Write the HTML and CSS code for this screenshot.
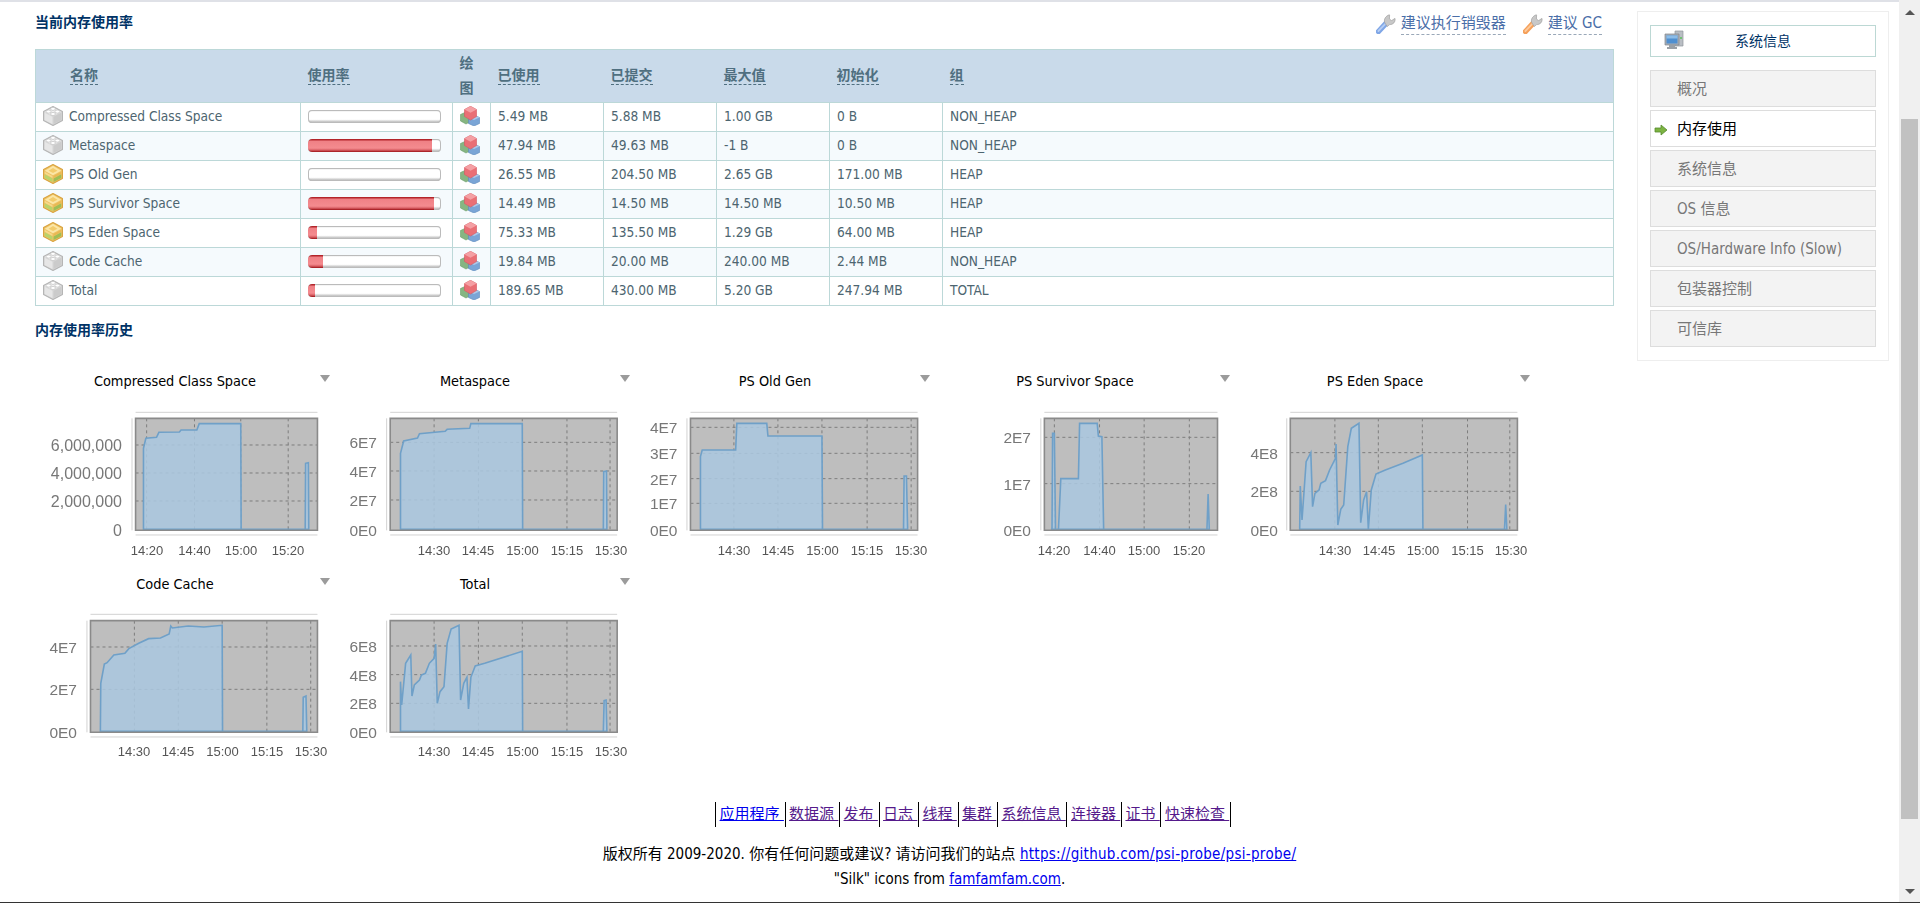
FILE: index.html
```html
<!DOCTYPE html>
<html lang="zh-CN">
<head>
<meta charset="utf-8">
<title>系统信息</title>
<link rel="stylesheet" href="styles.css">
</head>
<body>
<svg class="defs" aria-hidden="true">
  <symbol id="brick-grey" viewBox="1 1 18 18">
    <path d="M10 1.5 18.5 6v8L10 18.5 1.5 14V6Z" fill="#d6d6d6" stroke="#b5b5b5" stroke-linejoin="round"/>
    <path d="M10 2.5 17.5 6.2 10 10 2.5 6.2Z" fill="#f1f1f1"/>
    <path d="M2.5 7 9.5 10.6V17.2L2.5 13.6Z" fill="#e6e6e6"/>
    <path d="M17.5 7 10.5 10.6V17.2L17.5 13.6Z" fill="#cbcbcb"/>
    <ellipse cx="10" cy="3.6" rx="2.2" ry="1.4" fill="#fff" stroke="#bbb" stroke-width=".6"/>
    <ellipse cx="6" cy="6" rx="2.2" ry="1.4" fill="#fff" stroke="#bbb" stroke-width=".6"/>
    <ellipse cx="14" cy="6" rx="2.2" ry="1.4" fill="#fff" stroke="#bbb" stroke-width=".6"/>
    <ellipse cx="10" cy="8.2" rx="2.2" ry="1.4" fill="#fff" stroke="#bbb" stroke-width=".6"/>
  </symbol>
  <symbol id="brick-gold" viewBox="1 1 18 18">
    <path d="M10 1.5 18.5 6v8L10 18.5 1.5 14V6Z" fill="#eec264" stroke="#d9a441" stroke-linejoin="round"/>
    <path d="M10 2.5 17.5 7 10 11.2 2.5 7Z" fill="#fbe6a6"/>
    <path d="M10 4.6 14 7 10 9.2 6 7Z" fill="#f3cc6c"/>
    <path d="M2.5 8 9.5 11.8V13.6L2.5 9.8Z" fill="#f6d98b"/>
    <path d="M17.5 8 10.5 11.8V13.6L17.5 9.8Z" fill="#e9b854"/>
    <path d="M2.5 10.2 9.5 14V17.2L2.5 13.6Z" fill="#b9d36a"/>
    <path d="M17.5 10.2 10.5 14V17.2L17.5 13.6Z" fill="#9fbe55"/>
  </symbol>
  <symbol id="cubes" viewBox="0 0 20 20">
    <path d="M.5 8.5 6 6l5.5 2.5v6.5L6 18 .5 15Z" fill="#86b582" stroke="#69a069" stroke-width=".6"/>
    <path d="M8.500 11.500 14 9l5.500 2.500v6L14 20l-5.500-2.500Z" fill="#7aa5d6" stroke="#5a88bb" stroke-width=".6"/>
    <path d="M8.500 11.500 14 14l5.500-2.500L14 9Z" fill="#abc8e8"/>
    <path d="M4.500 3.500 10.500.3 16.500 3.500v7L10.500 14l-6-3.500Z" fill="#e96f75" stroke="#d5585f" stroke-width=".6"/>
    <path d="M4.500 3.500 10.500 6.700 16.500 3.500 10.500.3Z" fill="#f4a0a4"/>
  </symbol>
  <symbol id="wrench-blue" viewBox="0 0 20 20">
    <path d="M2.5 17.5 10 9.4" stroke="#7fa6e6" stroke-width="5.4" stroke-linecap="round"/>
    <path d="M2.4 17 9.6 9.6" stroke="#b5cdf3" stroke-width="1.8" stroke-linecap="round"/>
    <path d="M8.6 8.2c-.8-3 1-6.2 4.8-7.4L13.6 1l-.2 4 2.2 1.6 3.4-2.2c.6 3.6-1.8 6.2-5.4 6.2l-2.4 2Z" fill="#c8c8c8" stroke="#a0a0a0" stroke-width=".7" stroke-linejoin="round"/>
  </symbol>
  <symbol id="wrench-orange" viewBox="0 0 20 20">
    <path d="M2.5 17.5 10 9.4" stroke="#f5a05a" stroke-width="5.4" stroke-linecap="round"/>
    <path d="M2.4 17 9.6 9.6" stroke="#fcc99b" stroke-width="1.8" stroke-linecap="round"/>
    <path d="M8.6 8.2c-.8-3 1-6.2 4.8-7.4L13.6 1l-.2 4 2.2 1.6 3.4-2.2c.6 3.6-1.8 6.2-5.4 6.2l-2.4 2Z" fill="#c8c8c8" stroke="#a0a0a0" stroke-width=".7" stroke-linejoin="round"/>
  </symbol>
</svg>

<div class="viewport">
  <div class="main">
    <div class="content">
      <div class="left">
        <div class="headrow">
          <h3 class="heading">当前内存使用率</h3>
          <div class="actions">
            <a class="action"><svg class="ic20"><use href="#wrench-blue"/></svg><span>建议执行销毁器</span></a>
            <a class="action"><svg class="ic20"><use href="#wrench-orange"/></svg><span>建议 GC</span></a>
          </div>
        </div>
        <table class="pools">
          <colgroup>
            <col class="c-name"><col class="c-use"><col class="c-plot"><col class="c-num"><col class="c-num"><col class="c-num"><col class="c-num"><col>
          </colgroup>
          <thead>
            <tr>
              <th class="th-name"><span class="dash">名称</span></th>
              <th><span class="dash">使用率</span></th>
              <th>绘图</th>
              <th><span class="dash">已使用</span></th>
              <th><span class="dash">已提交</span></th>
              <th><span class="dash">最大值</span></th>
              <th><span class="dash">初始化</span></th>
              <th><span class="dash">组</span></th>
            </tr>
          </thead>
          <tbody>
            <tr>
              <td><div class="namecell"><svg class="ic20"><use href="#brick-grey"/></svg>Compressed Class Space</div></td>
              <td><div class="bar"></div></td>
              <td><svg class="ic20 block"><use href="#cubes"/></svg></td>
              <td>5.49 MB</td><td>5.88 MB</td><td>1.00 GB</td><td>0 B</td><td>NON_HEAP</td>
            </tr>
            <tr>
              <td><div class="namecell"><svg class="ic20"><use href="#brick-grey"/></svg>Metaspace</div></td>
              <td><div class="bar"><div class="fill" style="width:93%"></div></div></td>
              <td><svg class="ic20 block"><use href="#cubes"/></svg></td>
              <td>47.94 MB</td><td>49.63 MB</td><td>-1 B</td><td>0 B</td><td>NON_HEAP</td>
            </tr>
            <tr>
              <td><div class="namecell"><svg class="ic20"><use href="#brick-gold"/></svg>PS Old Gen</div></td>
              <td><div class="bar"></div></td>
              <td><svg class="ic20 block"><use href="#cubes"/></svg></td>
              <td>26.55 MB</td><td>204.50 MB</td><td>2.65 GB</td><td>171.00 MB</td><td>HEAP</td>
            </tr>
            <tr>
              <td><div class="namecell"><svg class="ic20"><use href="#brick-gold"/></svg>PS Survivor Space</div></td>
              <td><div class="bar"><div class="fill" style="width:95%"></div></div></td>
              <td><svg class="ic20 block"><use href="#cubes"/></svg></td>
              <td>14.49 MB</td><td>14.50 MB</td><td>14.50 MB</td><td>10.50 MB</td><td>HEAP</td>
            </tr>
            <tr>
              <td><div class="namecell"><svg class="ic20"><use href="#brick-gold"/></svg>PS Eden Space</div></td>
              <td><div class="bar"><div class="fill" style="width:7%"></div></div></td>
              <td><svg class="ic20 block"><use href="#cubes"/></svg></td>
              <td>75.33 MB</td><td>135.50 MB</td><td>1.29 GB</td><td>64.00 MB</td><td>HEAP</td>
            </tr>
            <tr>
              <td><div class="namecell"><svg class="ic20"><use href="#brick-grey"/></svg>Code Cache</div></td>
              <td><div class="bar"><div class="fill" style="width:11%"></div></div></td>
              <td><svg class="ic20 block"><use href="#cubes"/></svg></td>
              <td>19.84 MB</td><td>20.00 MB</td><td>240.00 MB</td><td>2.44 MB</td><td>NON_HEAP</td>
            </tr>
            <tr>
              <td><div class="namecell"><svg class="ic20"><use href="#brick-grey"/></svg>Total</div></td>
              <td><div class="bar"><div class="fill" style="width:5%"></div></div></td>
              <td><svg class="ic20 block"><use href="#cubes"/></svg></td>
              <td>189.65 MB</td><td>430.00 MB</td><td>5.20 GB</td><td>247.94 MB</td><td>TOTAL</td>
            </tr>
          </tbody>
        </table>

        <h3 class="heading heading-hist">内存使用率历史</h3>

        <div class="charts">
          <figure class="chart">
            <figcaption>Compressed Class Space</figcaption><i class="menu"></i>
            <svg class="plot" width="300" height="165">
              <g transform="translate(5,-50) scale(.3954,.3333)">
                <path class="frame" d="M267 187H727M267 555H727M258 205V541"/>
                <rect class="bg" x="267" y="205" width="460" height="336"/>
                <path class="grid" d="M295 205V541M416 205V541M533 205V541M653 205V541M267 285H727M267 369H727M267 453H727"/>
                <path class="area" d="M287 538V295L293 265 320 262 326 247 378 246 382 240 422 240 428 221H533L534 538H696L697 340 704 338 705 538Z"/>
                <rect class="border" x="267" y="205" width="460" height="336"/>
              </g>
              <text class="ya ya-wide" x="97" y="45">6,000,000</text><text class="ya ya-wide" x="97" y="73">4,000,000</text><text class="ya ya-wide" x="97" y="101">2,000,000</text><text class="ya ya-wide" x="97" y="130">0</text>
              <text class="xa" x="122" y="150">14:20</text><text class="xa" x="169.5" y="150">14:40</text><text class="xa" x="216" y="150">15:00</text><text class="xa" x="263" y="150">15:20</text>
            </svg>
          </figure>
          <figure class="chart">
            <figcaption>Metaspace</figcaption><i class="menu"></i>
            <svg class="plot" width="300" height="165">
              <g transform="translate(-295,-50) scale(.3954,.3333)">
                <path class="frame" d="M911 187H1485M911 555H1485M902 205V541"/>
                <rect class="bg" x="911" y="205" width="574" height="336"/>
                <path class="grid" d="M1022 205V541M1134 205V541M1245 205V541M1358 205V541M1467 205V541M911 277H1485M911 363H1485M911 450H1485"/>
                <path class="area" d="M937 538V310L945 273 980 264 985 251 1050 244 1055 238 1112 235 1115 221H1245L1246 538H1450L1451 365 1458 363 1459 538Z"/>
                <rect class="border" x="911" y="205" width="574" height="336"/>
              </g>
              <text class="ya" x="52" y="42">6E7</text><text class="ya" x="52" y="71">4E7</text><text class="ya" x="52" y="100">2E7</text><text class="ya" x="52" y="130">0E0</text>
              <text class="xa" x="109" y="150">14:30</text><text class="xa" x="153" y="150">14:45</text><text class="xa" x="197.5" y="150">15:00</text><text class="xa" x="242" y="150">15:15</text><text class="xa" x="286" y="150">15:30</text>
            </svg>
          </figure>
          <figure class="chart">
            <figcaption>PS Old Gen</figcaption><i class="menu"></i>
            <svg class="plot" width="300" height="165">
              <g transform="translate(15,-50) scale(.5869,.3333)">
                <path class="frame" d="M86 187H473M86 555H473M80 205V541"/>
                <rect class="bg" x="86" y="205" width="387" height="336"/>
                <path class="grid" d="M160 205V541M235 205V541M310 205V541M387 205V541M462 205V541M86 232H473M86 310H473M86 386H473M86 460H473"/>
                <path class="area" d="M103 538V320L106 300H163L165 220H216L218 258H310L311 538H449L450 378H454L456 538Z"/>
                <rect class="border" x="86" y="205" width="387" height="336"/>
              </g>
              <text class="ya" x="52.5" y="27">4E7</text><text class="ya" x="52.5" y="53">3E7</text><text class="ya" x="52.5" y="79">2E7</text><text class="ya" x="52.5" y="103">1E7</text><text class="ya" x="52.5" y="130">0E0</text>
              <text class="xa" x="109" y="150">14:30</text><text class="xa" x="153" y="150">14:45</text><text class="xa" x="197.5" y="150">15:00</text><text class="xa" x="242" y="150">15:15</text><text class="xa" x="286" y="150">15:30</text>
            </svg>
          </figure>
          <figure class="chart">
            <figcaption>PS Survivor Space</figcaption><i class="menu"></i>
            <svg class="plot" width="300" height="165">
              <g transform="translate(-285,-50) scale(.5869,.3333)">
                <path class="frame" d="M689 187H984M689 555H984M683 205V541"/>
                <rect class="bg" x="689" y="205" width="295" height="336"/>
                <path class="grid" d="M706 205V541M783 205V541M859 205V541M936 205V541M689 262H984M689 401H984"/>
                <path class="area" d="M700 538H702L703 250H706L708 538H713L717 386H747L749 220H779L781 258 787 260 790 538H966L968 432 970 538Z"/>
                <rect class="border" x="689" y="205" width="295" height="336"/>
              </g>
              <text class="ya" x="106" y="37">2E7</text><text class="ya" x="106" y="84">1E7</text><text class="ya" x="106" y="130">0E0</text>
              <text class="xa" x="129" y="150">14:20</text><text class="xa" x="174.5" y="150">14:40</text><text class="xa" x="219" y="150">15:00</text><text class="xa" x="264" y="150">15:20</text>
            </svg>
          </figure>
          <figure class="chart">
            <figcaption>PS Eden Space</figcaption><i class="menu"></i>
            <svg class="plot" width="300" height="165">
              <g transform="translate(-585,-50) scale(.5869,.3333)">
                <path class="frame" d="M1108 187H1495M1108 555H1495M1102 205V541"/>
                <rect class="bg" x="1108" y="205" width="387" height="336"/>
                <path class="grid" d="M1184 205V541M1258 205V541M1333 205V541M1410 205V541M1482 205V541M1108 308H1495M1108 424H1495"/>
                <path class="area" d="M1124 538 1125 408 1128 510 1135 335 1143 308 1146 470 1150 430 1157 420 1160 400 1168 392 1175 360 1185 325 1186 282 1189 525 1194 478 1199 465 1206 290 1212 235 1225 220 1228 518 1233 450 1238 425 1241 538 1246 420 1254 372 1270 360 1300 340 1333 315 1334 538H1473L1475 464 1477 538Z"/>
                <rect class="border" x="1108" y="205" width="387" height="336"/>
              </g>
              <text class="ya" x="53" y="53">4E8</text><text class="ya" x="53" y="91">2E8</text><text class="ya" x="53" y="130">0E0</text>
              <text class="xa" x="110" y="150">14:30</text><text class="xa" x="154" y="150">14:45</text><text class="xa" x="198" y="150">15:00</text><text class="xa" x="242.5" y="150">15:15</text><text class="xa" x="286" y="150">15:30</text>
            </svg>
          </figure>
          <figure class="chart">
            <figcaption>Code Cache</figcaption><i class="menu"></i>
            <svg class="plot" width="300" height="165">
              <g transform="translate(5,-43) scale(.3954,.3333)">
                <path class="frame" d="M153 163H727M153 531H727M144 182V517"/>
                <rect class="bg" x="153" y="182" width="574" height="335"/>
                <path class="grid" d="M264 182V517M375 182V517M486 182V517M599 182V517M710 182V517M153 261H727M153 388H727"/>
                <path class="area" d="M178 514 179 370 188 312 195 308 212 285 240 280 250 266 275 250 300 236 330 234 352 222 356 198 360 204 400 198 440 201 486 196 487 514H690L691 412 698 408 700 514Z"/>
                <rect class="border" x="153" y="182" width="574" height="335"/>
              </g>
              <text class="ya" x="52" y="44">4E7</text><text class="ya" x="52" y="86">2E7</text><text class="ya" x="52" y="129">0E0</text>
              <text class="xa" x="109" y="148">14:30</text><text class="xa" x="153" y="148">14:45</text><text class="xa" x="197.5" y="148">15:00</text><text class="xa" x="242" y="148">15:15</text><text class="xa" x="286" y="148">15:30</text>
            </svg>
          </figure>
          <figure class="chart">
            <figcaption>Total</figcaption><i class="menu"></i>
            <svg class="plot" width="300" height="165">
              <g transform="translate(-295,-43) scale(.3954,.3333)">
                <path class="frame" d="M911 163H1485M911 531H1485M902 182V517"/>
                <rect class="bg" x="911" y="182" width="574" height="335"/>
                <path class="grid" d="M1022 182V517M1134 182V517M1245 182V517M1358 182V517M1467 182V517M911 258H1485M911 344H1485M911 430H1485"/>
                <path class="area" d="M937 514V365L940 435 950 310 963 285 966 408 972 375 985 360 990 345 1000 340 1010 310 1022 295 1026 252 1030 430 1037 395 1047 380 1055 250 1065 207 1085 196 1089 420 1097 370 1105 352 1109 447 1115 352 1126 318 1150 310 1245 274 1246 514H1450L1452 422 1457 420 1459 514Z"/>
                <rect class="border" x="911" y="182" width="574" height="335"/>
              </g>
              <text class="ya" x="52" y="43">6E8</text><text class="ya" x="52" y="72">4E8</text><text class="ya" x="52" y="100">2E8</text><text class="ya" x="52" y="129">0E0</text>
              <text class="xa" x="109" y="148">14:30</text><text class="xa" x="153" y="148">14:45</text><text class="xa" x="197.5" y="148">15:00</text><text class="xa" x="242" y="148">15:15</text><text class="xa" x="286" y="148">15:30</text>
            </svg>
          </figure>
        </div>
      </div>

      <aside class="side">
        <div class="side-title">
          <svg class="ic20" viewBox="0 0 20 20">
            <path d="M11 1h8v15h-8Z" fill="#b9bec4" stroke="#8f959b" stroke-width=".7"/>
            <path d="M1 4h14v11H1Z" fill="#a9afb6" stroke="#7f858c" stroke-width=".7"/>
            <path d="M2.5 5.5h11v8h-11Z" fill="#4f8fd0"/>
            <path d="M2.5 5.5h11v3h-11Z" fill="#8bbce8"/>
            <path d="M5 15h6v2h2v2H3v-2h2Z" fill="#9aa0a6"/>
            <circle cx="17" cy="8" r="1" fill="#58c058"/>
          </svg>
          <span>系统信息</span>
        </div>
        <ul class="side-menu">
          <li>概况</li>
          <li class="active"><svg class="arrow" viewBox="0 0 14 12"><path d="M1 4h6V1l6 5-6 5V8H1Z" fill="#7cb342" stroke="#558b2f" stroke-width=".8" stroke-linejoin="round"/></svg>内存使用</li>
          <li>系统信息</li>
          <li>OS 信息</li>
          <li>OS/Hardware Info (Slow)</li>
          <li>包装器控制</li>
          <li>可信库</li>
        </ul>
      </aside>
    </div>

    <footer class="foot">
      <ul class="nav">
        <li><a class="fresh">应用程序&nbsp;</a></li>
        <li><a>数据源&nbsp;</a></li>
        <li><a>发布&nbsp;</a></li>
        <li><a>日志&nbsp;</a></li>
        <li><a>线程&nbsp;</a></li>
        <li><a>集群&nbsp;</a></li>
        <li><a>系统信息&nbsp;</a></li>
        <li><a>连接器&nbsp;</a></li>
        <li><a>证书&nbsp;</a></li>
        <li class="last"><a>快速检查&nbsp;</a></li>
      </ul>
      <p>版权所有 2009-2020. 你有任何问题或建议? 请访问我们的站点 <a class="fresh url">https://github.com/psi-probe/psi-probe/</a></p>
      <p>"Silk" icons from <a class="fresh">famfamfam.com</a>.</p>
    </footer>
  </div>

  <div class="scrollbar">
    <i class="sb-up"></i>
    <div class="sb-track"><div class="sb-thumb"></div></div>
    <i class="sb-down"></i>
  </div>
</div>
</body>
</html>
```
FILE: styles.css
```css
* { box-sizing: border-box; }
html, body { margin: 0; padding: 0; height: 903px; overflow: hidden; background: #fff; }
body {
  font-family: "DejaVu Sans", "Noto Sans CJK SC", sans-serif;
  font-stretch: condensed;
  font-size: 13px;
  color: #000;
}
.defs { position: absolute; width: 0; height: 0; }

.viewport { display: flex; height: 903px; border-bottom: 1px solid #333; }
.main { width: 1899px; flex: none; border-top: 2px solid #dfe1e7; }
.scrollbar { width: 21px; flex: none; background: #f0f0f0; display: flex; flex-direction: column; align-items: center; }

.content { display: flex; padding-left: 35px; height: 800px; }
.left { width: 1579px; flex: none; }

.headrow { display: flex; justify-content: space-between; height: 47px; padding-top: 3px; }
.heading { margin: 0; font-size: 14px; line-height: 34px; height: 34px; color: #003366; font-weight: bold; }
.actions { display: flex; gap: 17px; padding-right: 12px; padding-top: 9px; align-items: flex-start; }
.action { display: flex; align-items: flex-start; gap: 5px; color: #4a6ea8; font-size: 15px; line-height: 19px; }
.action span { border-bottom: 1px dashed #9aa8b8; height: 21px; }
.ic20 { width: 20px; height: 20px; flex: none; }
.block { display: block; }

.pools { width: 1579px; table-layout: fixed; border-collapse: collapse; border: 1px solid #bcd8d8; font-size: 13.6px; color: #4d6570; }
.c-name { width: 265px; }
.c-use { width: 152px; }
.c-plot { width: 38px; }
.c-num { width: 113px; }
.pools th { background: #c9daea; height: 53px; padding: 0 7px 1px; text-align: left; font-size: 14px; line-height: 25px; font-weight: bold; color: #4f6f80; border: 0; }
.pools th.th-name { padding-left: 34px; }
.dash { border-bottom: 1px dashed #4f6f80; padding-bottom: 1px; }
.pools td { height: 29px; padding: 0 7px 2px; border: 1px solid #bcd8d8; white-space: nowrap; }
.pools tbody tr:nth-child(even) td { background: #f5fafd; }
.namecell { display: flex; align-items: center; gap: 6px; }

.bar { width: 133px; height: 13px; border-radius: 4px; background: linear-gradient(#d8d8d8, #fff 2px, #fff 72%, #a4a4a4); box-shadow: inset 0 0 0 1px #bbb; overflow: hidden; }
.fill { height: 100%; border-radius: 4px 0 0 4px; background: linear-gradient(#b3242a, #b3242a 1px, #ef8085 2px, #f48b8f 70%, #d96065 85%, #9c1116); }

.heading-hist { margin-top: 7px; height: 34px; }

.charts { display: grid; grid-template-columns: repeat(5, 300px); row-gap: 8px; margin: 23px 0 0 -10px; }
.chart { position: relative; margin: 0; height: 195px; }
.chart figcaption { height: 22px; line-height: 22px; text-align: center; font-size: 14.4px; color: #000; margin-bottom: 8px; }
.menu { position: absolute; top: 5px; right: -5px; width: 0; height: 0; border-left: 5px solid transparent; border-right: 5px solid transparent; border-top: 7px solid #9b9b9b; }
.plot { display: block; filter: blur(.45px); overflow: visible; }
.plot g * { vector-effect: non-scaling-stroke; }
.frame { fill: none; stroke: #d2d2d2; stroke-width: 1; }
.bg { fill: #bebebe; }
.grid { fill: none; stroke: #7d7d7d; stroke-width: 1; stroke-dasharray: 3 3; }
.area { fill: rgba(170, 200, 225, .85); stroke: #6fa0c8; stroke-width: 1.6; }
.border { fill: none; stroke: #8a8a8a; stroke-width: 1.6; }
.ya { font-family: "Liberation Sans", sans-serif; font-size: 15.5px; fill: #777; text-anchor: end; dominant-baseline: central; }
.ya-wide { font-size: 16px; }
.xa { font-family: "Liberation Sans", sans-serif; font-size: 13px; fill: #555; text-anchor: middle; dominant-baseline: central; }

.side { width: 252px; height: 350px; margin: 9px 0 0 23px; border: 1px solid #eee; padding: 13px 12px 0; flex: none; }
.side-title { display: flex; align-items: center; height: 32px; border: 1px solid #bcd8d4; padding: 0 0 2px 13px; color: #003366; font-size: 14px; }
.side-title span { margin-left: 51px; }
.side-menu { list-style: none; margin: 13px 0 0; padding: 0; display: flex; flex-direction: column; gap: 3px; }
.side-menu li { position: relative; height: 37px; line-height: 36px; padding-left: 26px; background: #f3f3f3; border: 1px solid #ddd; color: #777; font-size: 15px; }
.side-menu li.active { background: #fff; color: #000; }
.arrow { position: absolute; left: 3px; top: 13px; width: 14px; height: 12px; }

.foot { text-align: center; font-size: 15px; }
.foot p { margin: 0; line-height: 25px; }
.foot a { color: #551a8b; text-decoration: underline; }
.foot a.fresh { color: #00e; }
.foot a.url { letter-spacing: .3px; }
.nav { list-style: none; margin: 0 0 15px; padding: 0 0 0 47px; display: flex; justify-content: center; line-height: 25px; height: 25px; }
.nav li { border-left: 1px solid #000; padding: 0 .7px 0 3.5px; }
.nav li.last { border-right: 1px solid #000; }

.sb-up, .sb-down { width: 0; height: 0; border-left: 5px solid transparent; border-right: 5px solid transparent; }
.sb-up { border-bottom: 5px solid #555; margin: 10px 0 0; }
.sb-down { border-top: 5px solid #555; margin: 0 0 8px; }
.sb-track { flex: 1; width: 100%; padding: 0 2px; }
.sb-thumb { margin-top: 104px; height: 700px; background: #c1c1c1; }
```
